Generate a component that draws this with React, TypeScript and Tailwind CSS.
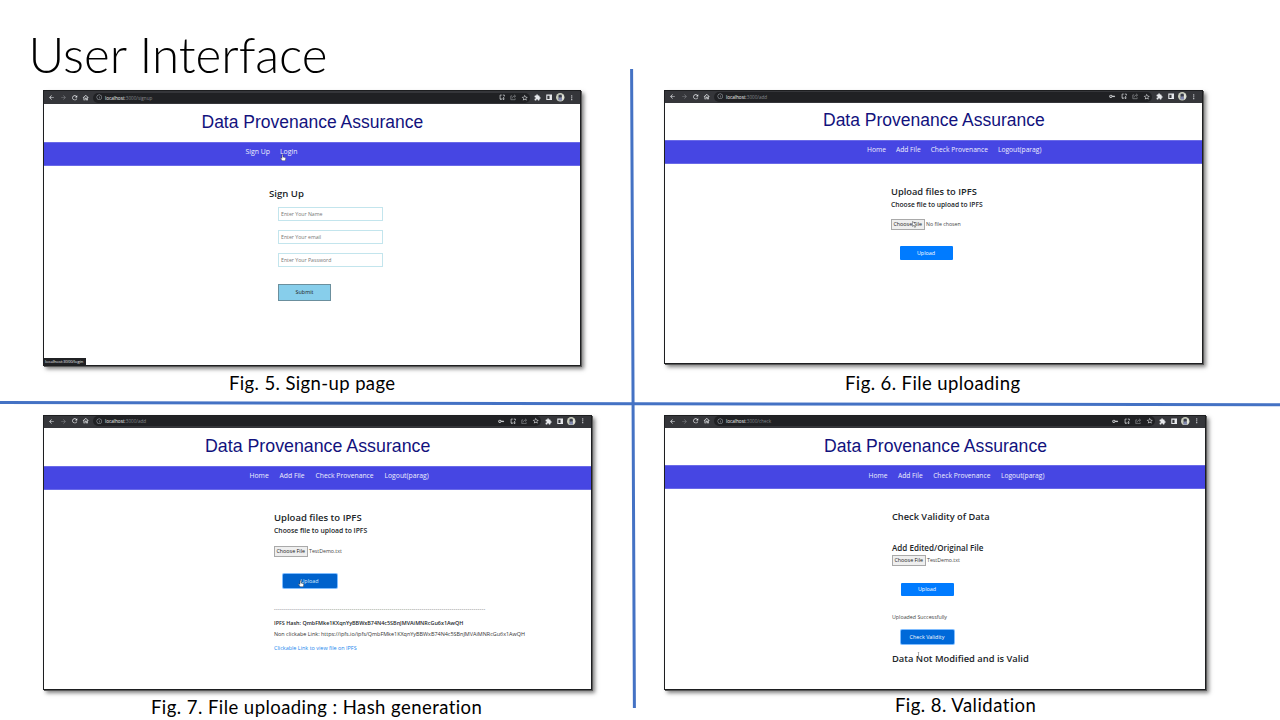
import type { ReactNode } from 'react';
import {
  MdArrowBack,
  MdArrowForward,
  MdExtension,
  MdInfoOutline,
  MdKey,
  MdMoreVert,
  MdOutlineHome,
  MdRefresh,
  MdStarBorder,
} from 'react-icons/md';

const HASH = 'QmbFMke1KXqnYyBBWxB74N4c5SBnJMVAiMNRcGu6x1AwQH';
const RULE = '-'.repeat(106);

function Cell({ children, className = '' }: { children: ReactNode; className?: string }) {
  return <span className={`flex w-[11.4px] shrink-0 items-center justify-center ${className}`}>{children}</span>;
}

function InstallIcon() {
  return (
    <svg viewBox="0 0 24 24" className="size-[6.5px]" fill="none" stroke="currentColor" strokeWidth="3">
      <path d="M10 4H4v15h8M4 19h4M20 9v-5h-6M17 11v10m-4-4 4 4 4-4" />
    </svg>
  );
}

function ShareIcon() {
  return (
    <svg viewBox="0 0 24 24" className="size-[6.5px]" fill="none" stroke="currentColor" strokeWidth="2.6">
      <path d="M8 7H3v14h16v-5M8 16c1-6 4-8 10-8M15 3l6 5-6 5" />
    </svg>
  );
}

function SidePanelIcon() {
  return (
    <svg viewBox="0 0 24 24" className="size-[6.5px]">
      <path d="M3 4h18v16H3z" fill="none" stroke="currentColor" strokeWidth="4" />
      <path d="M13 4h8v16h-8z" fill="currentColor" />
    </svg>
  );
}

function Avatar() {
  return (
    <svg viewBox="0 0 24 24" className="size-[8.5px]">
      <circle cx="12" cy="12" r="12" fill="#c9cdbd" />
      <path d="M7 5h9v14H7z" fill="#5d6470" />
      <circle cx="12" cy="9" r="4" fill="#3a3d4c" />
      <path d="M7 21c0-5 2-8 5-8s5 3 5 8z" fill="#8087b0" />
      <path d="M18 6h3v12h-3z" fill="#f5f5ef" />
    </svg>
  );
}

function Hand({ className }: { className: string }) {
  return (
    <svg viewBox="0 0 12 14" className={`absolute h-[7px] w-[6px] ${className}`}>
      <path
        d="M4 1.5c0-1.4 2-1.4 2 0V6l4.500 1c1 .3 1.200 1 1 2l-.8 4.500H4.500L1 9c-.8-1.200.6-2 1.500-1.200L4 9z"
        fill="#fff"
        stroke="#222"
        strokeWidth="0.8"
      />
    </svg>
  );
}

function Arrow({ className }: { className: string }) {
  return (
    <svg viewBox="0 0 12 18" className={`absolute h-[7px] w-[5px] ${className}`}>
      <path d="M1 1v13l3.200-3 2.300 5.500 2.300-1-2.300-5.300H11z" fill="#fff" stroke="#444" strokeWidth="1.300" />
    </svg>
  );
}

function Toolbar({ path, hasKey = false, className }: { path: string; hasKey?: boolean; className: string }) {
  return (
    <div className={`flex shrink-0 items-center bg-[#35363a] pr-[2.500px] pl-[2px] text-[#e8eaed] ${className}`}>
      <Cell><MdArrowBack size={7} /></Cell>
      <Cell className="text-[#7d7f83]"><MdArrowForward size={7} /></Cell>
      <Cell><MdRefresh size={7.5} /></Cell>
      <Cell><MdOutlineHome size={7.5} /></Cell>
      <div className="ml-px flex h-[10px] min-w-0 flex-1 items-center rounded-full bg-[#202124] pl-px">
        <Cell className="text-[#9aa0a6]"><MdInfoOutline size={6.5} /></Cell>
        <span className="text-[4.700px] leading-[8px] whitespace-nowrap text-[#f1f1f1]">localhost</span>
        <span className="text-[4.600px] leading-[8px] whitespace-nowrap text-[#85888c]">{path}</span>
        <span className="flex-1" />
        {hasKey && <Cell className="text-[#d5d7da]"><MdKey size={6.5} /></Cell>}
        <Cell className="text-[#c4c7ca]"><InstallIcon /></Cell>
        <Cell className="text-[#8b8e92]"><ShareIcon /></Cell>
        <Cell className="text-[#d5d7da]"><MdStarBorder size={7.5} /></Cell>
      </div>
      <Cell className="ml-[1.500px]"><MdExtension size={7} /></Cell>
      <Cell><SidePanelIcon /></Cell>
      <Cell><Avatar /></Cell>
      <Cell><MdMoreVert size={7.5} /></Cell>
    </div>
  );
}

function Browser({ className, children }: { className: string; children: ReactNode }) {
  return (
    <div
      className={`relative flex shrink-0 flex-col border border-[#1d1e20] bg-white shadow-[1px_1px_0_#5a5a5a,3px_3px_4px_rgba(0,0,0,0.5)] ${className}`}
    >
      {children}
    </div>
  );
}

function Heading({ className }: { className: string }) {
  return (
    <div className={`flex shrink-0 items-center font-['Liberation_Sans',sans-serif] whitespace-nowrap text-[#12127d] ${className}`}>
      Data Provenance Assurance
    </div>
  );
}

function Nav({ items, className }: { items: string[]; className: string }) {
  return (
    <nav className={`flex shrink-0 border-y border-[#6a6ae8] bg-[#4646e3] leading-[10px] text-[#eeeefc] ${className}`}>
      {items.map((item) => (
        <span key={item} className="whitespace-nowrap">{item}</span>
      ))}
    </nav>
  );
}

function Line({ className, children }: { className: string; children: ReactNode }) {
  return <div className={`shrink-0 whitespace-nowrap ${className}`}>{children}</div>;
}

function FilePicker({ name, className }: { name: string; className: string }) {
  return (
    <div className={`flex shrink-0 items-center ${className}`}>
      <span className="flex h-full w-[34.500px] items-center justify-center border border-[#a9a9a9] bg-[#efefef] text-[5.400px] whitespace-nowrap text-[#222]">
        Choose File
      </span>
      <span className="ml-px text-[5.250px] whitespace-nowrap text-[#444]">{name}</span>
    </div>
  );
}

function Button({ className, children }: { className: string; children: ReactNode }) {
  return (
    <div className={`flex shrink-0 items-center justify-center text-[5.400px] whitespace-nowrap ${className}`}>
      {children}
    </div>
  );
}

function Field({ text }: { text: string }) {
  return (
    <div className="flex h-[14px] w-[105px] shrink-0 items-center border border-[#c3e5ed] pt-px pl-[2px] text-[5.200px] whitespace-nowrap text-[#777]">
      {text}
    </div>
  );
}

function Caption({ className, children }: { className: string; children: ReactNode }) {
  return (
    <p className={`shrink-0 font-['Lato',sans-serif] text-[18.500px] leading-[24px] whitespace-nowrap text-black ${className}`}>
      {children}
    </p>
  );
}

const USER_NAV = ['Home', 'Add File', 'Check Provenance', 'Logout(parag)'];

export default function App() {
  return (
    <main className="relative flex h-[720px] w-[1280px] flex-col overflow-hidden bg-white font-['Open_Sans','Noto_Sans',sans-serif] text-[#212529]">
      <h1 className="h-[90px] shrink-0 pt-[24px] pl-[28.500px] font-['Lato',sans-serif] text-[49.300px] leading-[60px] font-light whitespace-nowrap text-black">
        User Interface
      </h1>

      <div className="flex h-[325px] shrink-0">
        <section className="flex w-[621px] shrink-0 flex-col pl-[43px]">
          <Browser className="h-[276px] w-[538px]">
            <Toolbar path=":3000/signup" className="h-[13px]" />
            <Heading className="h-[38px] pb-px pl-[157.500px] text-[17.500px]" />
            <Nav items={['Sign Up', 'Login']} className="h-[24px] gap-[10px] pt-[4px] pl-[201.500px] text-[6.900px]" />
            <div className="flex flex-1 flex-col pl-[225px]">
              <Line className="mt-[22px] text-[9.600px] leading-[12px] font-semibold">Sign Up</Line>
              <div className="mt-[7px] ml-[9px] flex flex-col gap-[9px]">
                <Field text="Enter Your Name" />
                <Field text="Enter Your email" />
                <Field text="Enter Your Password" />
              </div>
              <Button className="mt-[17px] ml-[9px] h-[17px] w-[53px] border border-[#6b8f9d] bg-[#87ceeb] text-[#222]">
                Submit
              </Button>
            </div>
            <div className="h-[7px] w-[42px] bg-[#202124] pl-[1px] text-[4.100px] leading-[7px] whitespace-nowrap text-[#e8eaed]">
              localhost:3000/login
            </div>
            <Hand className="top-[63px] left-[236px]" />
          </Browser>
          <Caption className="mt-[5px] pl-[186px] tracking-[0.380px]">Fig. 5. Sign-up page</Caption>
        </section>

        <section className="flex flex-1 flex-col pl-[43px]">
          <Browser className="h-[274px] w-[539px]">
            <Toolbar path=":3000/add" hasKey className="h-[12px] pb-px" />
            <Heading className="h-[37px] pb-[2px] pl-[158px] text-[17.500px]" />
            <Nav items={USER_NAV} className="h-[24px] gap-[10px] pt-[4px] pl-[202px] text-[6.700px]" />
            <div className="flex flex-1 flex-col pl-[226px]">
              <Line className="mt-[22px] text-[9.300px] leading-[12px] font-semibold">Upload files to IPFS</Line>
              <Line className="mt-[2px] text-[6.700px] leading-[10px] font-semibold">Choose file to upload to IPFS</Line>
              <FilePicker name="No file chosen" className="mt-[9px] -ml-[0.500px] h-[11px]" />
              <Button className="mt-[16px] ml-[8.500px] h-[14px] w-[53px] rounded-[1px] bg-[#007bff] text-white">Upload</Button>
            </div>
            <Arrow className="top-[130px] left-[247px]" />
          </Browser>
          <Caption className="mt-[7px] pl-[181px] tracking-[0.400px]">Fig. 6. File uploading</Caption>
        </section>
      </div>

      <div className="flex flex-1">
        <section className="flex w-[621px] shrink-0 flex-col pl-[43px]">
          <Browser className="h-[275px] w-[549px]">
            <Toolbar path=":3000/add" hasKey className="h-[12px] pb-[2px]" />
            <Heading className="h-[38px] pb-px pl-[161px] text-[17.800px]" />
            <Nav items={USER_NAV} className="h-[24px] gap-[10.800px] pt-[4px] pl-[205.500px] text-[6.800px]" />
            <div className="flex flex-1 flex-col pl-[230px]">
              <Line className="mt-[22px] text-[9.500px] leading-[12px] font-semibold">Upload files to IPFS</Line>
              <Line className="mt-[2px] text-[6.800px] leading-[10px] font-semibold">Choose file to upload to IPFS</Line>
              <FilePicker name="TestDemo.txt" className="mt-[10px] -ml-[0.500px] h-[11px]" />
              <Button className="mt-[16.500px] ml-[8.500px] h-[14.500px] w-[54px] rounded-[1px] bg-[#0062cc] text-[#dcebfb] shadow-[0_0_0_1px_#80bdff]">
                Upload
              </Button>
              <Line className="mt-[16px] text-[5.400px] leading-[10px] tracking-[0.260px] text-[#555]">{RULE}</Line>
              <Line className="mt-[4px] text-[5.420px] leading-[10px] font-semibold">IPFS Hash: {HASH}</Line>
              <Line className="mt-[0.500px] text-[5.440px] leading-[10px] text-[#333]">
                Non clickabe Link: https://ipfs.io/ipfs/{HASH}
              </Line>
              <Line className="mt-[4px] text-[5.440px] leading-[10px] text-[#2186ee]">Clickable Link to view file on IPFS</Line>
            </div>
            <Hand className="top-[164px] left-[254px]" />
          </Browser>
          <Caption className="mt-[5px] pl-[108px] tracking-[0.440px]">Fig. 7. File uploading : Hash generation</Caption>
        </section>

        <section className="flex flex-1 flex-col pl-[43px]">
          <Browser className="h-[275px] w-[542px]">
            <Toolbar path=":3000/check" hasKey className="h-[12px] pb-[2px]" />
            <Heading className="h-[37px] pl-[159px] text-[17.600px]" />
            <Nav items={USER_NAV} className="h-[24px] gap-[10.500px] pt-[5px] pl-[203.500px] text-[6.700px]" />
            <div className="flex flex-1 flex-col pl-[227px]">
              <Line className="mt-[22px] text-[9.250px] leading-[12px] font-semibold">Check Validity of Data</Line>
              <Line className="mt-[19px] text-[8.050px] leading-[12px] font-semibold">Add Edited/Original File</Line>
              <FilePicker name="TestDemo.txt" className="mt-px -ml-[0.500px] h-[11px]" />
              <Button className="mt-[16.500px] ml-[8.500px] h-[13.500px] w-[53px] rounded-[1px] bg-[#007bff] text-white">Upload</Button>
              <Line className="mt-[16px] text-[5.300px] leading-[10px] text-[#444]">Uploaded Successfully</Line>
              <Button className="mt-[8px] ml-[8.500px] h-[13.500px] w-[53px] rounded-[1px] bg-[#0069d9] text-white shadow-[0_0_0_1px_#80bdff]">
                Check Validity
              </Button>
              <Line className="mt-[9px] text-[9.360px] leading-[12px] font-semibold">Data Not Modified and is Valid</Line>
            </div>
            <svg viewBox="0 0 4 8" className="absolute top-[236px] left-[252px] h-[6px] w-[3px]">
              <path d="M1 .5h2M2 .5v7M1 7.500h2" stroke="#777" strokeWidth="0.800" />
            </svg>
          </Browser>
          <Caption className="mt-[3px] pl-[231px] tracking-[0.450px]">Fig. 8. Validation</Caption>
        </section>
      </div>

      <svg viewBox="0 0 1280 720" className="pointer-events-none absolute inset-0 h-[720px] w-[1280px]">
        <path d="M631.600 69 634.400 708M0 402.600 1280 404.800" stroke="#4472c4" strokeWidth="3" />
      </svg>
    </main>
  );
}
